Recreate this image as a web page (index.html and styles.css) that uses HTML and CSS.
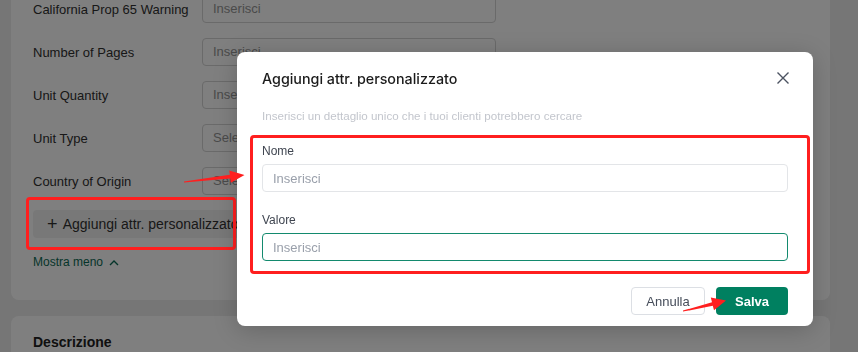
FILE: index.html
```html
<!DOCTYPE html>
<html lang="it">
<head>
    <meta charset="UTF-8">
    <meta name="viewport" content="width=device-width, initial-scale=1.0">
    <title>Aggiungi attr. personalizzato</title>
    <link rel="stylesheet" href="styles.css">
</head>
<body>
    <div class="page">
        <div class="card attrs">
            <div class="row">
                <span class="lbl">California Prop 65 Warning</span>
                <div class="field">Inserisci</div>
            </div>
            <div class="row">
                <span class="lbl">Number of Pages</span>
                <div class="field">Inserisci</div>
            </div>
            <div class="row">
                <span class="lbl">Unit Quantity</span>
                <div class="field">Inserisci</div>
            </div>
            <div class="row">
                <span class="lbl">Unit Type</span>
                <div class="field">Seleziona</div>
            </div>
            <div class="row">
                <span class="lbl">Country of Origin</span>
                <div class="field">Seleziona</div>
            </div>
            <div class="add-wrap">
                <button class="add-btn"><span class="plus">+</span> Aggiungi attr. personalizzato</button>
                <div class="mark mark-add"></div>
            </div>
            <a class="less" href="#">Mostra meno
                <svg width="10" height="7" viewBox="0 0 10 7"><path d="M1 6 L5 2 L9 6" fill="none" stroke="currentColor" stroke-width="1.4"/></svg>
            </a>
        </div>
        <div class="card desc">
            <h3>Descrizione</h3>
        </div>
    </div>

    <div class="overlay"></div>

    <div class="modal">
        <div class="modal-head">
            <h2>Aggiungi attr. personalizzato</h2>
            <svg class="close" width="14" height="14" viewBox="0 0 14 14"><path d="M1.5 1.5 L12.5 12.5 M12.5 1.5 L1.5 12.5" stroke="#4b5361" stroke-width="1.4" fill="none"/></svg>
        </div>
        <p class="hint">Inserisci un dettaglio unico che i tuoi clienti potrebbero cercare</p>
        <div class="fields">
            <label class="flabel">Nome</label>
            <input class="inp" type="text" placeholder="Inserisci">
            <label class="flabel second">Valore</label>
            <input class="inp active" type="text" placeholder="Inserisci">
        </div>
        <div class="actions">
            <button class="btn-cancel">Annulla</button>
            <button class="btn-save">Salva</button>
        </div>
    </div>

    <!-- annotation arrows, drawn in page coordinates -->
    <svg class="arrow arrow-one" width="70" height="22" viewBox="180 165 70 22">
        <polygon points="184,182.6 230.3,178.6 230.8,182.8 244.5,175 229.2,170.4 229.9,174.8 184,181.6" fill="#ff1f1f"/>
    </svg>
    <svg class="arrow arrow-two" width="50" height="22" viewBox="680 293 50 22">
        <polygon points="683,311.6 712.8,305.8 714,310.2 726,300.6 710.8,297.6 712,302.2 683,310.6" fill="#ff1f1f"/>
    </svg>
</body>
</html>
```

FILE: styles.css
```css
body{
    margin: 0;
    background-color: #ededed;
    font-family: "Liberation Sans", Arial, sans-serif;
    overflow: hidden;
}
.page{
    padding: 0 28px 0 11px;
}
.card{
    background-color: #fff;
    border-radius: 8px;
}
.attrs{
    margin-top: -25px;
    padding: 20px 22px 30px 22px;
    border-radius: 0 0 8px 8px;
}
.row{
    display: flex;
    align-items: center;
    height: 28px;
    margin-bottom: 15px;
}
.lbl{
    width: 169px;
    font-size: 13px;
    color: #303030;
}
.field{
    box-sizing: border-box;
    width: 294px;
    height: 28px;
    border: 1px solid #d4d4d4;
    border-radius: 4px;
    padding: 0 10px;
    line-height: 26px;
    font-size: 13px;
    color: #959595;
}
.add-wrap{
    position: relative;
    margin-top: 1px;
}
.add-btn{
    height: 28px;
    border: none;
    border-radius: 4px;
    background-color: #f1f1f1;
    padding: 0 16px 0 14px;
    font-family: "Liberation Sans", Arial, sans-serif;
    font-size: 14px;
    color: #303030;
}
.plus{
    font-size: 18px;
    font-weight: 300;
    vertical-align: -1px;
    margin-right: 2px;
}
.mark{
    position: absolute;
    z-index: 2;
    border: 3px solid #ff1f1f;
    border-radius: 4px;
}
.mark-add{
    left: -7px;
    top: -13px;
    width: 204px;
    height: 47px;
}
.less{
    display: inline-block;
    margin-top: 17px;
    font-size: 12px;
    color: #0b6b55;
    text-decoration: none;
}
.less svg{
    margin-left: 3px;
}
.desc{
    margin-top: 16px;
    padding: 18px 22px 20px;
}
.desc h3{
    margin: 0;
    font-size: 14px;
    line-height: 16px;
    color: #202020;
}
.overlay{
    position: fixed;
    z-index: 1;
    inset: 0;
    background-color: rgba(0, 0, 0, 0.5);
}
.modal{
    position: absolute;
    z-index: 3;
    left: 237px;
    top: 52px;
    width: 576px;
    box-sizing: border-box;
    padding: 16px 25px 11px 25px;
    background-color: #fff;
    border-radius: 8px;
    box-shadow: 0 4px 24px rgba(0, 0, 0, 0.2);
}
.modal-head{
    display: flex;
    justify-content: space-between;
    align-items: center;
    height: 20px;
}
.modal-head h2{
    margin: 0;
    font-family: Inter, sans-serif;
    font-size: 14.3px;
    font-weight: 500;
    color: #1b1b1b;
}
.close{
    margin-right: -2px;
}
.hint{
    margin: 21px 0 0;
    font-size: 11.6px;
    line-height: 14px;
    color: #c3c6cd;
}
.fields{
    margin: 12px -22px 0 -12px;
    padding: 5px 19px 10px 9px;
    border: 3px solid #ff1f1f;
    border-radius: 4px;
    display: flex;
    flex-direction: column;
}
.flabel{
    font-size: 12px;
    color: #3f4550;
    line-height: 16px;
    margin-bottom: 5px;
}
.flabel.second{
    margin-top: 20px;
}
.inp{
    box-sizing: border-box;
    height: 28px;
    border: 1px solid #e3e5e8;
    border-radius: 4px;
    padding: 0 10px;
    font-family: "Liberation Sans", Arial, sans-serif;
    font-size: 13px;
    outline: none;
}
.inp::placeholder{
    color: #9aa0ab;
}
.inp.active{
    border-color: #138a6e;
}
.actions{
    display: flex;
    justify-content: flex-end;
    gap: 11px;
    margin-top: 13px;
}
.btn-cancel, .btn-save{
    height: 28px;
    border-radius: 4px;
    font-family: "Liberation Sans", Arial, sans-serif;
    font-size: 13px;
}
.btn-cancel{
    width: 74px;
    background-color: #fff;
    border: 1px solid #dcdfe4;
    color: #454c59;
}
.btn-save{
    width: 72px;
    background-color: #008060;
    border: none;
    color: #fff;
    font-weight: bold;
}
.arrow{
    position: absolute;
    z-index: 4;
}
.arrow-one{
    left: 180px;
    top: 165px;
}
.arrow-two{
    left: 680px;
    top: 293px;
}
```
